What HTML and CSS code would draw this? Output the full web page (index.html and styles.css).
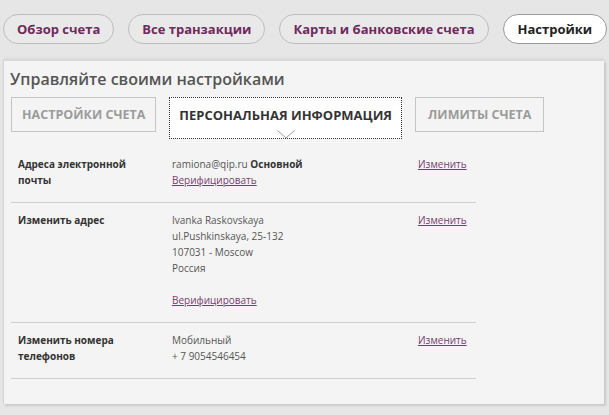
FILE: index.html
```html
<!DOCTYPE html>
<html lang="ru">
<head>
<meta charset="utf-8">
<link rel="stylesheet" href="styles.css">
</head>
<body>
<nav class="tabs">
  <a class="tab">Обзор счета</a>
  <a class="tab">Все транзакции</a>
  <a class="tab">Карты и банковские счета</a>
  <a class="tab active">Настройки</a>
</nav>
<main class="panel">
  <h1 class="title">Управляйте своими настройками</h1>
  <div class="subtabs">
    <div class="subtab">Настройки счета</div>
    <div class="subtab current">Персональная информация<svg class="chev" width="18" height="9" viewBox="0 0 18 9"><path d="M0.5 0.5 L9 8 L17.5 0.5" fill="none" stroke="#9a9a9a" stroke-width="1"/></svg></div>
    <div class="subtab last">Лимиты счета</div>
  </div>
  <div class="rows">
    <div class="row">
      <div class="label">Адреса электронной почты</div>
      <div class="value">ramiona@qip.ru <b>Основной</b><br><a class="link">Верифицировать</a></div>
      <div class="action"><a class="link">Изменить</a></div>
    </div>
    <div class="row">
      <div class="label">Изменить адрес</div>
      <div class="value">Ivanka Raskovskaya<br>ul.Pushkinskaya, 25-132<br>107031 - Moscow<br>Россия<br><br><a class="link">Верифицировать</a></div>
      <div class="action"><a class="link">Изменить</a></div>
    </div>
    <div class="row">
      <div class="label">Изменить номера телефонов</div>
      <div class="value">Мобильный<br>+ 7 9054546454</div>
      <div class="action"><a class="link">Изменить</a></div>
    </div>
  </div>
</main>
</body>
</html>
```
FILE: styles.css
```css
* { box-sizing: border-box; }
body {
  margin: 0;
  background: #e6e6e6;
  font-family: "Open Sans", "Liberation Sans", sans-serif;
  width: 609px;
  height: 415px;
  overflow: hidden;
}
.tabs {
  display: flex;
  gap: 14px;
  padding: 14px 0 0 3px;
}
.tab {
  display: flex;
  align-items: center;
  justify-content: center;
  height: 30px;
  padding: 0 13px;
  border: 1px solid #bdbdbd;
  border-radius: 15px;
  background: #e9e9e9;
  color: #6e2a5c;
  font-weight: 700;
  font-size: 13px;
  white-space: nowrap;
}
.tab.active {
  background: #fff;
  color: #222;
  border-color: #9a9a9a;
  padding: 0 14px;
}
.panel {
  margin: 16px 0 0 3px;
  width: 601px;
  height: 344px;
  background: #f4f4f4;
  border-left: 1px solid #d4d4d4;
  border-top: 1px solid #d8d8d8;
  box-shadow: 2px 2px 2px rgba(0,0,0,0.12), 0 -2px 2px rgba(0,0,0,0.06);
  padding: 7px 0 0 6px;
}
.title {
  margin: 0;
  font-size: 16px;
  font-weight: 600;
  color: #555;
  line-height: 22px;
}
.subtabs {
  display: flex;
  align-items: flex-start;
  gap: 13px;
  margin-top: 7px;
  padding-left: 1px;
}
.subtab {
  position: relative;
  height: 35px;
  display: flex;
  align-items: center;
  padding: 0 10px;
  border: 1px solid #c4c4c4;
  text-transform: uppercase;
  font-weight: 700;
  font-size: 12.5px;
  color: #9b9b9b;
  white-space: nowrap;
}
.subtab.current {
  height: 42px;
  padding: 0 9px 7px;
  background: #fff;
  border: 1px dotted #333;
  color: #333;
  font-size: 13px;
}
.subtab.last { padding: 0 12px; }
.chev {
  position: absolute;
  left: 107px;
  bottom: -1px;
}
.rows {
  margin-top: 8px;
  width: 465px;
  margin-left: 1px;
}
.row {
  display: grid;
  grid-template-columns: 161px 246px 1fr;
  padding: 9px 0 14px;
  border-bottom: 1px solid #cfcfcf;
  font-size: 10px;
  line-height: 16px;
  color: #555;
}
.label {
  padding-left: 7px;
  padding-right: 30px;
  font-weight: 700;
  color: #333;
}
.value b { color: #333; }
.link {
  color: #7a3b6c;
  text-decoration: underline;
}
```
